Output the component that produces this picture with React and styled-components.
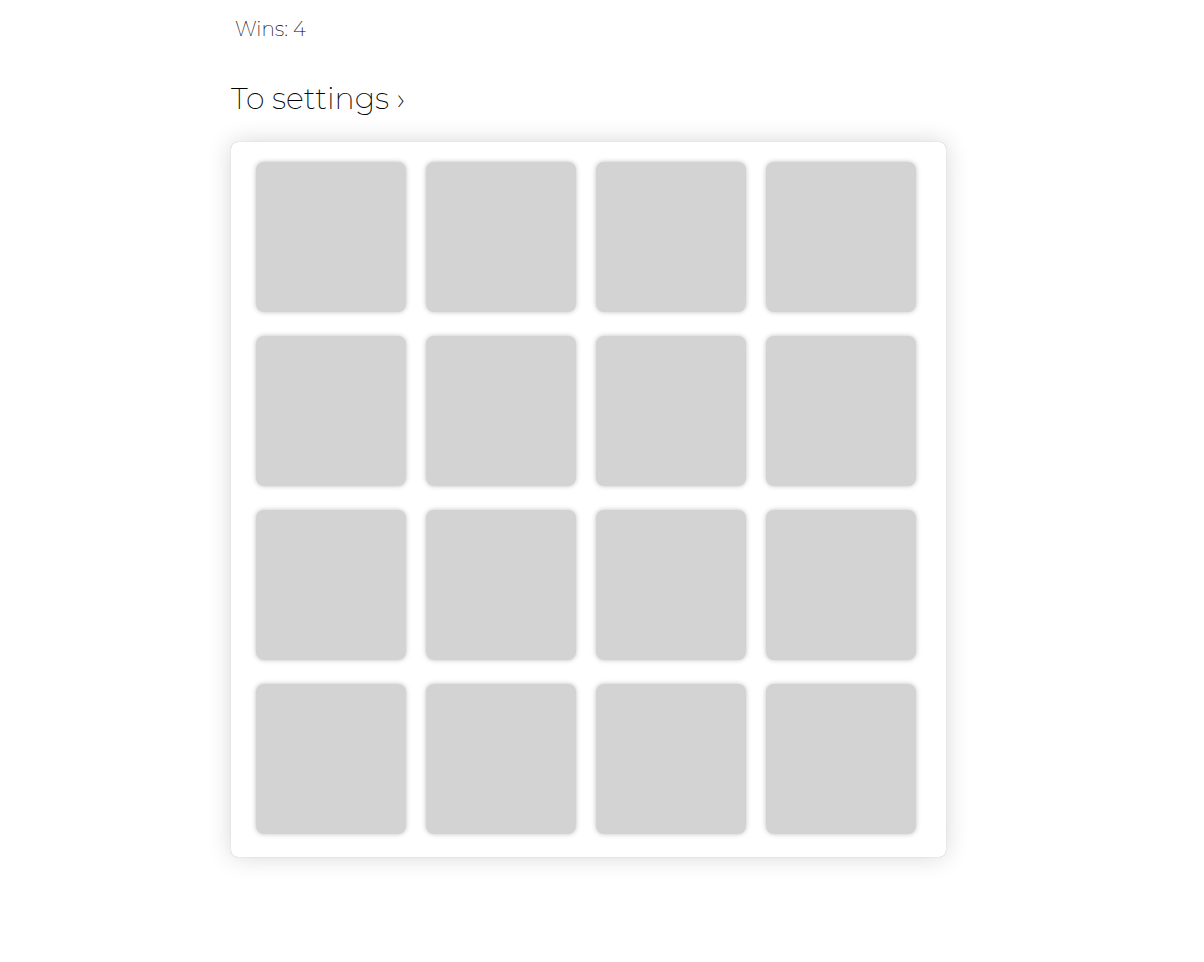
import React from "react";
import styled, { createGlobalStyle } from "styled-components";

const GlobalStyle = createGlobalStyle`
  body {
    margin: 0;
    background: #fff;
    color: #000;
    font-family: Montserrat, Inter, "Liberation Sans", sans-serif;
    font-weight: 200;
  }
`;

const Page = styled.main`
  box-sizing: border-box;
  max-width: 742px;
  margin: 0 auto;
  padding: 16px 0 40px;
`;

const Wins = styled.p`
  margin: 0;
  padding-left: 4px;
  font-size: 20px;
  line-height: 26px;
`;

const SettingsLink = styled.a`
  display: block;
  width: fit-content;
  margin: 37px 0 23px;
  color: inherit;
  font-size: 30px;
  line-height: 40px;
  text-decoration: none;
`;

const Board = styled.section`
  box-sizing: border-box;
  max-width: 715px;
  display: grid;
  grid-template-columns: repeat(4, minmax(0, 150px));
  gap: 24px 20px;
  padding: 20px 30px 23px 25px;
  border-radius: 7px;
  background: #fff;
  box-shadow: 0 0 1px rgba(0, 0, 0, 0.3), 0 0 25px rgba(0, 0, 0, 0.16);
`;

const Card = styled.button`
  width: 100%;
  aspect-ratio: 1;
  padding: 0;
  border: 0;
  border-radius: 8px;
  background: #d3d3d3;
  box-shadow: 0 0 5px rgba(0, 0, 0, 0.25);
  cursor: pointer;
`;

const cards = Array.from({ length: 16 }, (_, i) => i + 1);

export default function App() {
  return (
    <>
      <GlobalStyle />
      <Page>
        <Wins>Wins: 4</Wins>
        <SettingsLink href="#settings">To settings ›</SettingsLink>
        <Board>
          {cards.map((n) => (
            <Card key={n} type="button" aria-label={`Card ${n}`} />
          ))}
        </Board>
      </Page>
    </>
  );
}
